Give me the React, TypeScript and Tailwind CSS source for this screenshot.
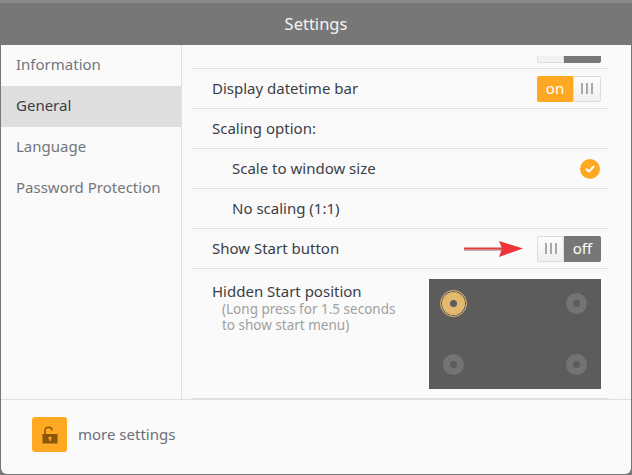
const font = { fontFamily: '"Noto Sans", "Open Sans", sans-serif' };

function Grip({ narrow }: { narrow?: boolean }) {
  return (
    <span
      className={`flex h-[26px] shrink-0 items-center justify-center gap-[3px] rounded-[2px] border border-[#dcdcdc] bg-gradient-to-b from-[#fcfcfc] to-[#f0f0f0] ${
        narrow ? "w-[27px]" : "w-[28px]"
      }`}
    >
      <span className="h-[11px] w-[2px] bg-[#a8a8a8]" />
      <span className="h-[11px] w-[2px] bg-[#a8a8a8]" />
      <span className="h-[11px] w-[2px] bg-[#a8a8a8]" />
    </span>
  );
}

function Toggle({ on }: { on: boolean }) {
  return (
    <div className="flex h-[26px] w-[64px] items-center text-[15px] leading-none text-[#fdfdfd]">
      {on ? (
        <>
          <span className="flex h-[26px] flex-1 items-center justify-center rounded-l-[2px] bg-[#fea921]">on</span>
          <Grip />
        </>
      ) : (
        <>
          <Grip narrow />
          <span className="flex h-[26px] flex-1 items-center justify-center rounded-r-[2px] bg-[#777777]">off</span>
        </>
      )}
    </div>
  );
}

function Row({ children, indent }: { children: React.ReactNode; indent?: boolean }) {
  return (
    <div
      className={`flex h-[40px] items-center justify-between border-b border-[#e0e0e0] pr-2 text-[15px] text-[#3a3f47] ${
        indent ? "pl-10" : "pl-5"
      }`}
    >
      {children}
    </div>
  );
}

function Dot({ active }: { active?: boolean }) {
  if (active) {
    return (
      <span className="flex h-[27px] w-[27px] items-center justify-center rounded-full border border-[#e2b96f]">
        <span className="flex h-[23px] w-[23px] items-center justify-center rounded-full bg-[#e2b96f]">
          <span className="h-[7px] w-[7px] rounded-full bg-[#5c5c5c]" />
        </span>
      </span>
    );
  }
  return (
    <span className="flex h-[27px] w-[27px] items-center justify-center">
      <span className="flex h-[21px] w-[21px] items-center justify-center rounded-full bg-[#737373]">
        <span className="h-[7px] w-[7px] rounded-full bg-[#5c5c5c]" />
      </span>
    </span>
  );
}

const menu = ["Information", "General", "Language", "Password Protection"];

export default function App() {
  return (
    <div className="flex h-[475px] w-[632px] flex-col overflow-hidden bg-[#777777]" style={font}>
      <div className="h-[3px] bg-[#8a8a8a]" />
      <div className="flex h-[42px] shrink-0 items-center justify-center text-[16.5px] text-[#f4f4f4]">Settings</div>
      <div className="mx-px mb-px flex min-h-0 flex-1 flex-col rounded-b-[6px] bg-[#fafafa]">
        <div className="flex h-[355px] shrink-0 border-b border-[#e0e0e0]">
          <div className="w-[181px] shrink-0 border-r border-[#e0e0e0]">
            {menu.map((item) => (
              <div
                key={item}
                className={`flex h-[41px] items-center pb-[2px] pl-[15px] text-[15px] ${
                  item === "General" ? "bg-[#dedede] text-[#3a3f47]" : "text-[#72767c]"
                }`}
              >
                {item}
              </div>
            ))}
          </div>
          <div className="w-[427px] pl-[10px]">
            {/* previous row, scrolled almost out of view */}
            <div className="flex h-[24px] items-end justify-end border-b border-[#e0e0e0] pr-2 pb-[5px]">
              <div className="flex h-[7px] w-[64px] overflow-hidden rounded-b-[2px]">
                <span className="w-[27px] rounded-b-[2px] border-x border-b border-[#dcdcdc] bg-[#f2f2f2]" />
                <span className="flex-1 bg-[#777777]" />
              </div>
            </div>
            <Row>
              <span>Display datetime bar</span>
              <Toggle on />
            </Row>
            <Row>Scaling option:</Row>
            <Row indent>
              <span>Scale to window size</span>
              <span className="mr-px flex h-[20px] w-[20px] items-center justify-center rounded-full bg-[#fea921]">
                <svg width="12" height="12" viewBox="0 0 12 12" fill="none" stroke="#fff" strokeWidth="2" strokeLinecap="round" strokeLinejoin="round">
                  <path d="M2.5 6.2 5 8.5 9.5 3.8" />
                </svg>
              </span>
            </Row>
            <Row indent>No scaling (1:1)</Row>
            <Row>
              <span>Show Start button</span>
              <div className="flex items-center">
                <svg width="60" height="18" viewBox="0 0 60 18" className="mr-[13px]">
                  <path d="M0 7.5H38V9.5H0Z" fill="#ea3a3c" />
                  <path d="M0 9.5H38V10.5H0Z" fill="#9a6a6a" />
                  <path d="M35 1 59 8.5 35 17 38 8.5Z" fill="#ee3438" />
                </svg>
                <Toggle on={false} />
              </div>
            </Row>
            <div className="flex h-[130px] justify-between border-b border-[#e0e0e0] pt-[10px] pr-2 pl-5">
              <div className="pt-[2px] text-[#3a3f47]">
                <div className="text-[15px] leading-[20px]">Hidden Start position</div>
                <div className="pl-[10px] text-[13.5px] leading-[16px] text-[#a0a0a0]">
                  (Long press for 1.5 seconds
                  <br />
                  to show start menu)
                </div>
              </div>
              <div className="grid h-[110px] w-[172px] grid-cols-2 content-between justify-between bg-[#5c5c5c] p-[11px]">
                <Dot active />
                <span className="justify-self-end">
                  <Dot />
                </span>
                <Dot />
                <span className="justify-self-end">
                  <Dot />
                </span>
              </div>
            </div>
          </div>
        </div>
        <div className="flex flex-1 items-center gap-[11px] pb-[5px] pl-[31px]">
          <span className="flex h-[35px] w-[35px] items-center justify-center rounded-[3px] bg-[#fea921]">
            <svg width="16" height="18" viewBox="0 0 16 18">
              <path d="M3 8V4.5C3 2.6 4.4 1.2 6.5 1.2S10 2.6 10 4.5" fill="none" stroke="#8a5608" strokeWidth="1.5" />
              <rect x="0.5" y="8" width="15" height="9.5" fill="#8a5608" />
              <circle cx="8" cy="12" r="1.6" fill="#fea921" />
              <rect x="7.3" y="12" width="1.4" height="3" fill="#fea921" />
            </svg>
          </span>
          <span className="text-[15px] text-[#6b7079]">more settings</span>
        </div>
      </div>
    </div>
  );
}
